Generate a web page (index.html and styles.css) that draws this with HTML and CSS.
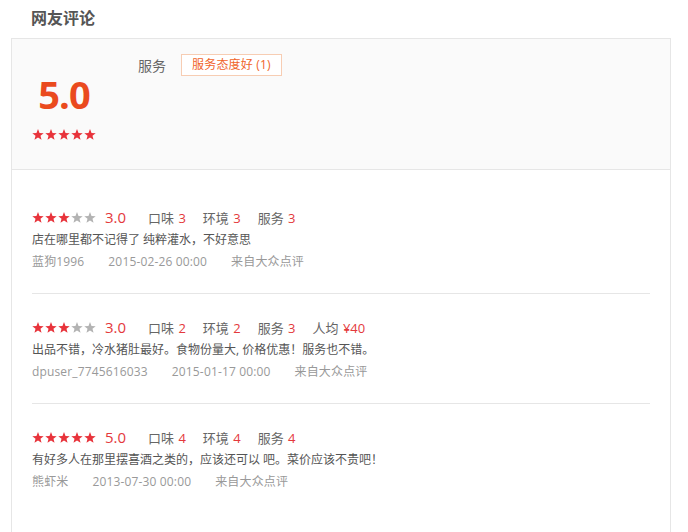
FILE: index.html
```html
<!DOCTYPE html>
<html lang="zh">
<head>
<meta charset="utf-8">
<link rel="stylesheet" href="styles.css">
</head>
<body>
<svg width="0" height="0" class="defs">
  <defs>
    <polygon id="star" points="6,0 7.53,3.9 11.71,4.15 8.47,6.8 9.53,10.85 6,8.6 2.47,10.85 3.53,6.8 0.29,4.15 4.47,3.9"/>
  </defs>
</svg>
<div class="page">
  <h2 class="title">网友评论</h2>
  <div class="box">
    <div class="summary">
      <div class="score-col">
        <div class="score">5.0</div>
        <svg class="stars" width="64" height="11" viewBox="0 0 64 11">
          <use href="#star" x="0" class="on"/><use href="#star" x="13" class="on"/><use href="#star" x="26" class="on"/><use href="#star" x="39" class="on"/><use href="#star" x="52" class="on"/>
        </svg>
      </div>
      <div class="tags">
        <span class="tag-label">服务</span>
        <span class="tag">服务态度好 (1)</span>
      </div>
    </div>
    <div class="reviews">
      <div class="review">
        <div class="row">
          <svg class="stars" width="64" height="11" viewBox="0 0 64 11">
            <use href="#star" x="0" class="on"/><use href="#star" x="13" class="on"/><use href="#star" x="26" class="on"/><use href="#star" x="39" class="off"/><use href="#star" x="52" class="off"/>
          </svg>
          <span class="rate">3.0</span>
          <span class="item">口味 <em>3</em></span>
          <span class="item">环境 <em>3</em></span>
          <span class="item">服务 <em>3</em></span>
        </div>
        <p class="text">店在哪里都不记得了 纯粹灌水，不好意思</p>
        <div class="meta"><span>蓝狗1996</span><span>2015-02-26 00:00</span><span>来自大众点评</span></div>
      </div>
      <div class="review">
        <div class="row">
          <svg class="stars" width="64" height="11" viewBox="0 0 64 11">
            <use href="#star" x="0" class="on"/><use href="#star" x="13" class="on"/><use href="#star" x="26" class="on"/><use href="#star" x="39" class="off"/><use href="#star" x="52" class="off"/>
          </svg>
          <span class="rate">3.0</span>
          <span class="item">口味 <em>2</em></span>
          <span class="item">环境 <em>2</em></span>
          <span class="item">服务 <em>3</em></span>
          <span class="item">人均 <em>¥40</em></span>
        </div>
        <p class="text">出品不错，冷水猪肚最好。食物份量大, 价格优惠！服务也不错。</p>
        <div class="meta"><span>dpuser_7745616033</span><span>2015-01-17 00:00</span><span>来自大众点评</span></div>
      </div>
      <div class="review">
        <div class="row">
          <svg class="stars" width="64" height="11" viewBox="0 0 64 11">
            <use href="#star" x="0" class="on"/><use href="#star" x="13" class="on"/><use href="#star" x="26" class="on"/><use href="#star" x="39" class="on"/><use href="#star" x="52" class="on"/>
          </svg>
          <span class="rate">5.0</span>
          <span class="item">口味 <em>4</em></span>
          <span class="item">环境 <em>4</em></span>
          <span class="item">服务 <em>4</em></span>
        </div>
        <p class="text">有好多人在那里摆喜酒之类的，应该还可以 吧。菜价应该不贵吧！</p>
        <div class="meta"><span>熊虾米</span><span>2013-07-30 00:00</span><span>来自大众点评</span></div>
      </div>
    </div>
  </div>
</div>
</body>
</html>
```

FILE: styles.css
```css
* { box-sizing: border-box; }
html, body { margin: 0; padding: 0; background: #fff; }
body {
  font-family: "Open Sans", "Noto Sans CJK SC", sans-serif;
  color: #555;
  overflow: hidden;
}
.defs { position: absolute; width: 0; height: 0; }
.page { padding-left: 11px; width: 671px; }
.title {
  margin: 0;
  height: 38px;
  padding: 7px 0 0 20px;
  font-size: 16px;
  line-height: 22px;
  font-weight: bold;
  color: #555;
}
.box {
  border: 1px solid #e6e6e6;
  border-bottom: none;
  min-height: 500px;
}
.summary {
  display: flex;
  background: #fafafa;
  border-bottom: 1px solid #e6e6e6;
  height: 131px;
  padding-left: 20px;
}
.score-col {
  width: 64px;
  display: flex;
  flex-direction: column;
  align-items: center;
  padding-top: 33px;
}
.score {
  font-size: 38px;
  line-height: 44px;
  font-weight: bold;
  color: #ea4a1e;
  font-family: "Open Sans", sans-serif;
  letter-spacing: -1px;
}
.score-col .stars { margin-top: 13px; }
.stars { display: block; flex: none; }
.stars .on { fill: #e8333b; }
.stars .off { fill: #b3b3b3; }
.tags {
  display: flex;
  align-items: center;
  height: 22px;
  margin-top: 15px;
  margin-left: 42px;
}
.tag-label { font-size: 14px; color: #666; margin-right: 15px; }
.tag {
  font-size: 12px;
  color: #f0642a;
  border: 1px solid #f7cdb3;
  background: #fff;
  height: 22px;
  line-height: 20px;
  padding: 0 10px 0 10px;
  letter-spacing: 0.2px;
}
.reviews { padding: 14px 20px 0 20px; }
.review {
  padding: 23px 0 19px;
  border-bottom: 1px solid #e6e6e6;
}
.review:last-child { border-bottom: none; }
.row {
  display: flex;
  align-items: center;
  height: 20px;
}
.rate {
  margin-left: 9px;
  font-size: 15px;
  color: #e4393c;
  width: 43px;
}
.item {
  font-size: 13px;
  color: #666;
  margin-right: 17px;
}
.item em { font-style: normal; color: #e4393c; margin-left: 1px; }
.text {
  margin: 3px 0 0;
  font-size: 12px;
  line-height: 20px;
  color: #555;
}
.meta {
  font-size: 12px;
  line-height: 24px;
  color: #999;
  display: flex;
  gap: 24px;
  letter-spacing: 0.15px;
}
```
